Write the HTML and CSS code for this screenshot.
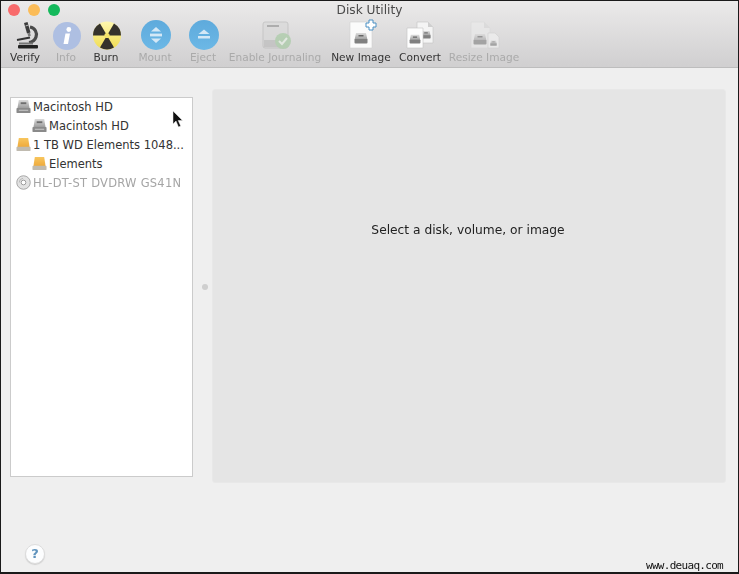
FILE: index.html
```html
<!DOCTYPE html>
<html lang="en">
<head>
<meta charset="utf-8">
<title>Disk Utility</title>
<link rel="stylesheet" href="styles.css">
</head>
<body>
<svg class="defs" width="0" height="0" aria-hidden="true">
  <defs>
    <linearGradient id="grey" x1="0" y1="0" x2="0" y2="1"><stop offset="0" stop-color="#dcdcdc"/><stop offset="1" stop-color="#9a9a9a"/></linearGradient>
    <linearGradient id="orange" x1="0" y1="0" x2="0" y2="1"><stop offset="0" stop-color="#f8c65e"/><stop offset="1" stop-color="#eea93a"/></linearGradient>
    <linearGradient id="burn" x1="0" y1="0" x2="0" y2="1"><stop offset="0" stop-color="#fff8b0"/><stop offset="1" stop-color="#f0dc50"/></linearGradient>
    <linearGradient id="blue" x1="0" y1="0" x2="0" y2="1"><stop offset="0" stop-color="#5eaadc"/><stop offset="1" stop-color="#6cb8e6"/></linearGradient>
    <symbol id="drive" viewBox="0 0 16 16">
      <path d="M3 1h10l1.500 9h-13z" fill="url(#grey)"/>
      <rect x="0.500" y="9.500" width="15" height="5.500" rx="1" fill="#8a8a8a"/>
      <rect x="5" y="3.500" width="6" height="2" fill="#6e6e6e"/>
      <rect x="3" y="11.500" width="10" height="1" fill="#cdcdcd"/>
    </symbol>
    <symbol id="ext" viewBox="0 0 16 16">
      <path d="M3 1h10l1.500 10h-13z" fill="url(#orange)"/>
      <rect x="0.500" y="10.500" width="15" height="4.500" rx="1" fill="#c0bbb0"/>
    </symbol>
    <symbol id="disc" viewBox="0 0 16 16">
      <circle cx="8" cy="8" r="7.200" fill="#e2e2e2" stroke="#a2a2a2"/>
      <circle cx="8" cy="8" r="2.500" fill="#fff" stroke="#999"/>
      <path d="M3.500 8a4.500 4.500 0 0 1 4-4.500" fill="none" stroke="#b5b5b5"/>
    </symbol>
    <symbol id="imgdrive" viewBox="0 0 14 12">
      <path d="M2 1h10l1.500 7h-13z" fill="url(#grey)"/>
      <rect x="0.500" y="7" width="13" height="4.500" rx="1" fill="#808080"/>
      <rect x="4.500" y="3" width="5" height="1.500" fill="#666"/>
    </symbol>
  </defs>
</svg>
<div class="window">
  <header class="chrome">
    <div class="titlebar">
      <div class="lights">
        <span class="light light-red"></span>
        <span class="light light-yellow"></span>
        <span class="light light-green"></span>
      </div>
      <div class="title">Disk Utility</div>
    </div>
    <div class="toolbar">
      <div class="tool tool-verify">
        <svg class="tool-icon" viewBox="0 0 32 30">
          <path d="M15 3l3.500-1 3 10.500-3.500 1z" fill="#3b3b3b"/>
          <path d="M16.500 6l3-1" stroke="#bbb" stroke-width="1"/>
          <path d="M21 7c5 1 7.500 5.500 6 10-1 3-3.500 5-7 5.500" fill="none" stroke="#4a4a4a" stroke-width="3.200"/>
          <path d="M18.500 13.500l2.500-.7.800 3-2.500.7z" fill="#777"/>
          <path d="M8 20l13-2.500" stroke="#333" stroke-width="2.200"/>
          <path d="M10 23.500h14" stroke="#777" stroke-width="2"/>
          <rect x="9" y="25" width="20" height="3.500" rx="1" fill="#222"/>
        </svg>
        <span class="tool-label">Verify</span>
      </div>
      <div class="tool tool-info is-off">
        <svg class="tool-icon" viewBox="0 0 32 30">
          <circle cx="17" cy="16" r="14" fill="#aebfe2"/>
          <path d="M15.500 13.500h4.500l-2 10.500h-4.500z" fill="#fff"/>
          <circle cx="18.800" cy="9.500" r="2.400" fill="#fff"/>
        </svg>
        <span class="tool-label">Info</span>
      </div>
      <div class="tool tool-burn">
        <svg class="tool-icon" viewBox="0 0 32 30">
          <circle cx="17" cy="15.500" r="14" fill="url(#burn)"/>
          <path d="M17 15.500L24 27.600A14 14 0 0 1 10 27.600z" fill="#35322c"/>
          <path d="M17 15.500L3 15.500A14 14 0 0 1 10 3.400z" fill="#35322c"/>
          <path d="M17 15.500L24 3.400A14 14 0 0 1 31 15.500z" fill="#35322c"/>
          <circle cx="17" cy="15.500" r="2.600" fill="#f3e36a"/>
        </svg>
        <span class="tool-label">Burn</span>
      </div>
      <div class="tool tool-mount is-off">
        <svg class="tool-icon" viewBox="0 0 32 30">
          <circle cx="17" cy="15" r="15" fill="url(#blue)"/>
          <path d="M17 7l5 4.500h-10zM17 23l5-4.500h-10z" fill="#d4e8f6"/>
          <rect x="11" y="13.600" width="12" height="2.800" fill="#d4e8f6"/>
        </svg>
        <span class="tool-label">Mount</span>
      </div>
      <div class="tool tool-eject is-off">
        <svg class="tool-icon" viewBox="0 0 32 30">
          <circle cx="17" cy="15" r="15" fill="url(#blue)"/>
          <path d="M17 9.500l5.500 4.500h-11z" fill="#d4e8f6"/>
          <rect x="11" y="16" width="12" height="2.500" fill="#d4e8f6"/>
        </svg>
        <span class="tool-label">Eject</span>
      </div>
      <div class="tool tool-journal is-off">
        <svg class="tool-icon icon-faded" viewBox="0 0 32 30">
          <rect x="4" y="2" width="25" height="26" rx="2" fill="#d8d8d8" stroke="#b5b5b5"/>
          <rect x="8" y="5" width="12" height="2" fill="#8c8c8c"/>
          <rect x="5" y="20" width="23" height="7" fill="#b8b8b8"/>
          <circle cx="24" cy="21" r="8" fill="#9ec79a"/>
          <path d="M20 21l3 3 5-6" fill="none" stroke="#e8f2e6" stroke-width="2"/>
        </svg>
        <span class="tool-label">Enable Journaling</span>
      </div>
      <div class="tool tool-new">
        <svg class="tool-icon" viewBox="0 0 32 30">
          <path d="M5 2h22v26h-22z" fill="#fbfbfb" stroke="#d0d0d0" stroke-width=".6"/>
          <use href="#imgdrive" x="9" y="12" width="14" height="12"/>
          <path d="M24 0h4v3h3v4h-3v3h-4v-3h-3v-4h3z" fill="#fff" stroke="#4a90c4"/>
        </svg>
        <span class="tool-label">New Image</span>
      </div>
      <div class="tool tool-convert">
        <svg class="tool-icon" viewBox="0 0 32 30">
          <path d="M13 2h11l5 5v16h-16z" fill="#f4f4f4" stroke="#c4c4c4" stroke-width=".6"/>
          <path d="M24 2v5h5z" fill="#cfcfcf"/>
          <use href="#imgdrive" x="17" y="10" width="10" height="9"/>
          <path d="M3 8h16v20h-16z" fill="#fdfdfd" stroke="#c4c4c4" stroke-width=".6"/>
          <use href="#imgdrive" x="5" y="14" width="12" height="10"/>
        </svg>
        <span class="tool-label">Convert</span>
      </div>
      <div class="tool tool-resize is-off">
        <svg class="tool-icon icon-faded" viewBox="0 0 32 30">
          <path d="M3 2h13l6 6v20h-19z" fill="#ececec" stroke="#d4d4d4" stroke-width=".6"/>
          <path d="M16 2v6h6z" fill="#d8d8d8"/>
          <use href="#imgdrive" x="5" y="13" width="14" height="12"/>
          <path d="M20 13h7l4 4v11h-11z" fill="#f4f4f4" stroke="#c8c8c8" stroke-width=".6"/>
          <use href="#imgdrive" x="22" y="20" width="7" height="6"/>
        </svg>
        <span class="tool-label">Resize Image</span>
      </div>
    </div>
  </header>
  <main class="content">
    <aside class="sidebar">
      <div class="row"><svg class="row-icon"><use href="#drive"/></svg><span>Macintosh HD</span></div>
      <div class="row row-child"><svg class="row-icon"><use href="#drive"/></svg><span>Macintosh HD</span></div>
      <div class="row"><svg class="row-icon"><use href="#ext"/></svg><span>1 TB WD Elements 1048...</span></div>
      <div class="row row-child"><svg class="row-icon"><use href="#ext"/></svg><span>Elements</span></div>
      <div class="row row-off"><svg class="row-icon"><use href="#disc"/></svg><span>HL-DT-ST DVDRW GS41N</span></div>
    </aside>
    <div class="splitter"><span class="grip"></span></div>
    <section class="detail">Select a disk, volume, or image</section>
  </main>
  <footer class="footer">
    <button class="help" type="button">?</button>
  </footer>
  <svg class="cursor" viewBox="0 0 12 17"><path d="M1 0v13l3-3 2.500 6 2.200-1-2.500-5.500h4.300z" fill="#111" stroke="#eee" stroke-width=".5"/></svg>
  <div class="watermark">www.deuaq.com</div>
</div>
</body>
</html>
```
FILE: styles.css
```css
* { box-sizing: border-box; }
html, body { margin: 0; padding: 0; }
body { width: 739px; height: 574px; overflow: hidden; background: #111; font-family: "DejaVu Sans", sans-serif; }
.defs { position: absolute; }
.window {
  position: relative;
  width: 739px;
  height: 574px;
  display: flex;
  flex-direction: column;
  background: #efefef;
  border-style: solid;
  border-color: #1a1a1a;
  border-width: 1px 1px 2px 1px;
}
.chrome {
  height: 67px;
  flex: none;
  background: linear-gradient(#ebeaea, #d0cfd0);
  border-bottom: 1px solid #bdbdbd;
  filter: blur(.45px);
}
.titlebar {
  height: 18px;
  display: grid;
  grid-template-columns: 1fr auto 1fr;
  align-items: center;
}
.lights { display: flex; gap: 8px; padding-left: 7px; }
.light { width: 12px; height: 12px; border-radius: 50%; }
.light-red { background: #f86b6c; }
.light-yellow { background: #fbbc58; }
.light-green { background: #14b95c; }
.title { font-size: 12.2px; line-height: 17px; color: #4a4a4a; }
.toolbar {
  display: grid;
  grid-template-columns: 40px 42px 38px 60px 36px 108px 64px 54px 74px;
  padding-left: 4px;
  margin-top: 1px;
}
.tool { display: flex; flex-direction: column; align-items: center; }
.tool-icon { width: 32px; height: 30px; overflow: visible; display: block; flex: none; }
.icon-faded { opacity: .6; }
.tool-label { font-size: 10.6px; line-height: 14px; color: #333; white-space: nowrap; }
.is-off .tool-label { color: #aaa; }
.content {
  flex: 1;
  display: flex;
  align-items: flex-start;
  padding: 21px 0 0 9px;
  filter: blur(.35px);
}
.sidebar {
  width: 183px;
  height: 380px;
  margin-top: 8px;
  background: #fff;
  border: 1px solid #cbcbcb;
  flex: none;
}
.row {
  height: 19px;
  display: flex;
  align-items: center;
  gap: 2px;
  padding-left: 5px;
  padding-bottom: 2px;
  font-size: 11.5px;
  color: #333;
  white-space: nowrap;
}
.row-child { padding-left: 21px; }
.row-off { color: #a5a5a5; letter-spacing: .25px; }
.row-icon { width: 15px; height: 15px; flex: none; }
.splitter { width: 19px; height: 394px; flex: none; display: flex; align-items: center; justify-content: center; padding: 2px 0 0 5px; }
.grip { width: 6px; height: 6px; border-radius: 50%; background: #cfcfcf; }
.detail {
  width: 514px;
  height: 394px;
  flex: none;
  background: #e5e5e5;
  border: 1px solid #e8e8e8;
  border-radius: 3px;
  padding: 132px 2px 0 0;
  text-align: center;
  font-size: 12.25px;
  line-height: 16px;
  color: #222;
}
.footer {
  flex: none;
  height: 20px;
  padding-left: 24px;
  margin-bottom: 8px;
  filter: blur(.3px);
}
.help {
  width: 20px;
  height: 20px;
  padding: 0;
  border: 1px solid #dcdcdc;
  border-radius: 50%;
  background: #fcfdfe;
  box-shadow: 0 1px 1px #cfcfcf;
  font: bold 13px/18px "DejaVu Sans", sans-serif;
  color: #5f93bd;
  display: block;
}
.cursor { position: absolute; left: 171px; top: 110px; width: 12px; height: 17px; }
.watermark {
  position: absolute;
  left: 645px;
  top: 558px;
  font: 11px/14px "DejaVu Sans Mono", monospace;
  letter-spacing: -.7px;
  color: #111;
}
```
